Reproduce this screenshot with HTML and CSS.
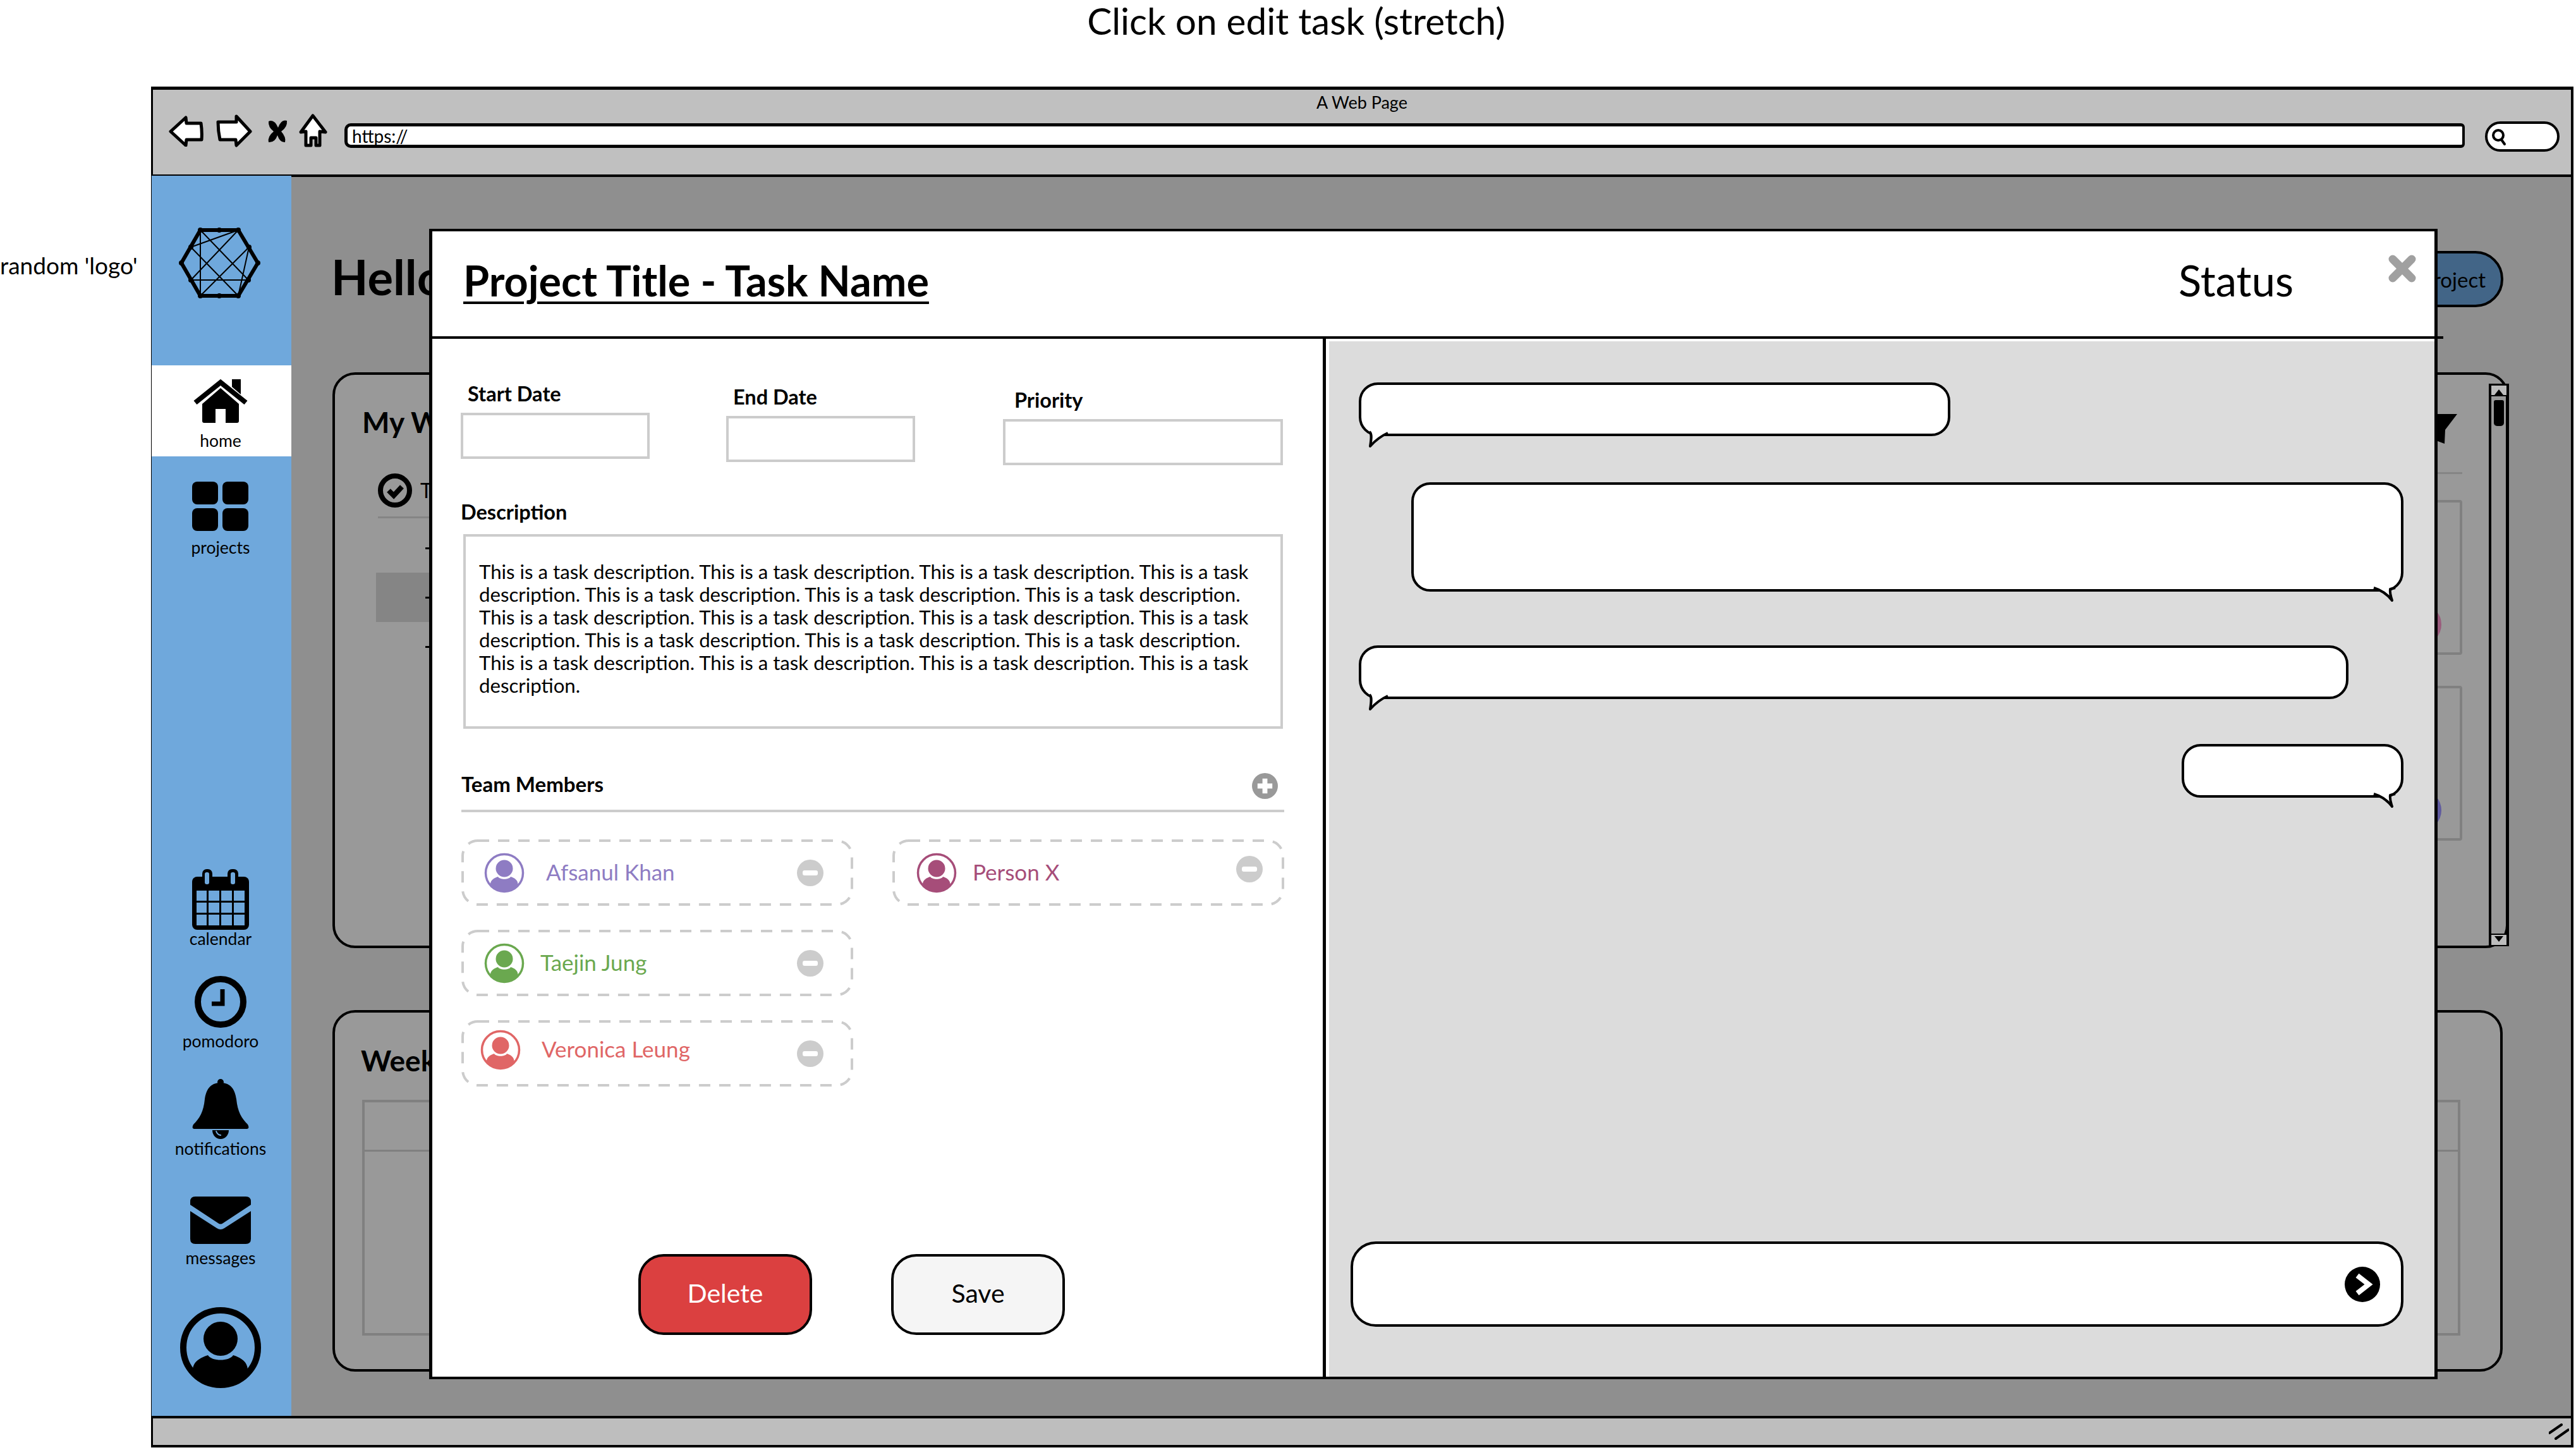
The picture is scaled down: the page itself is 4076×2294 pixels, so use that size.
FILE: index.html
```html
<!DOCTYPE html>
<html>
<head>
    <title>Click on edit task (stretch)</title>
    <link rel="stylesheet" href="styles.css">
</head>
<body>
    <svg class="icon-defs" width="0" height="0">
        <symbol id="user" viewBox="0 0 128 128">
            <circle cx="64" cy="64" r="59" fill="none" stroke="currentColor"/>
            <circle cx="64" cy="50" r="27" fill="currentColor"/>
            <path fill="currentColor" d="M20 108V100C20 86 32 80 44 76C50 86 78 86 84 76C96 80 107 86 107 100V108C96 118 80 123 64 123C48 123 32 118 20 108Z"/>
        </symbol>
        <symbol id="minus" viewBox="0 0 42 42">
            <circle cx="21" cy="21" r="21" fill="#ccc"/>
            <rect x="9" y="17" width="24" height="8" rx="3" fill="#fff"/>
        </symbol>
    </svg>

    <h1 class="page-title">Click on edit task (stretch)</h1>

    <div class="stage">
        <div class="logo-note">random 'logo'</div>

        <div class="window">
            <div class="chrome">
                <div class="window-title">A Web Page</div>
                <div class="toolbar">
                    <svg class="tool tool-back" viewBox="0 0 55 49"><path d="M3 25L27 3L28 12H51Q53 25 52 38H28L27 47Z"/></svg>
                    <svg class="tool tool-forward" viewBox="0 0 57 52"><path d="M3 12H32V3L54 27L32 49L31 40H6Q3 26 3 12Z"/></svg>
                    <svg class="tool tool-stop" viewBox="0 0 31 37"><path d="M1 3Q10 -1 16 13Q21 -1 30 2Q31 12 21 19Q29 28 27 36Q19 37 15 25Q11 37 1 36Q-1 27 9 19Q0 12 1 3Z"/></svg>
                    <svg class="tool tool-home" viewBox="0 0 45 54"><path d="M22 3L42 29L33 28V50H27V38H19V50H11V28L3 29Z"/></svg>
                    <div class="url-bar">https://</div>
                    <div class="search-pill">
                        <svg class="search-icon" viewBox="0 0 24 26"><circle cx="10" cy="10" r="8"/><path d="M15 17L20 24"/></svg>
                    </div>
                </div>
            </div>

            <div class="app">
                <nav class="sidebar">
                    <div class="brand">
                        <svg class="brand-logo" viewBox="0 0 124 108">
                            <path class="hex" d="M30 3H90L121 55L90 107H30L0 55Z"/>
                            <path class="hex-lines" d="M30 3V107M90 3L15 30M90 3L15 82M30 3L106 82M15 30L90 107M107 30L30 107M107 30L90 107M15 82H106"/>
                            <path class="hex-dots" d="M30 3h0M60 3h0M90 3h0M15 30h0M107 30h0M0 55h0M121 55h0M15 82h0M106 82h0M30 107h0M60 107h0M90 107h0"/>
                        </svg>
                    </div>

                    <a class="nav-item nav-home">
                        <svg class="nav-icon" width="86" height="69" viewBox="0 0 86 69">
                            <path d="M14 39L43 14L72 39V66Q72 69 69 69H51V47H35V69H17Q14 69 14 66Z"/>
                            <path class="roof" d="M3 37L43 5L83 37"/>
                            <path d="M61 0H75V24L61 12Z"/>
                        </svg>
                        <span>home</span>
                    </a>
                    <a class="nav-item nav-projects">
                        <svg class="nav-icon" width="90" height="78" viewBox="0 0 90 78">
                            <rect width="41" height="36" rx="8"/>
                            <rect x="48" width="41" height="36" rx="8"/>
                            <rect y="42" width="41" height="36" rx="8"/>
                            <rect x="48" y="42" width="41" height="36" rx="8"/>
                        </svg>
                        <span>projects</span>
                    </a>

                    <div class="nav-bottom">
                        <a class="nav-item nav-calendar">
                            <svg class="nav-icon" width="90" height="96" viewBox="0 0 90 96">
                                <rect y="12" width="90" height="84" rx="8"/>
                                <rect x="16" width="16" height="27" rx="7"/>
                                <rect x="56" width="17" height="27" rx="7"/>
                                <g class="cutout">
                                    <rect x="20" y="5" width="7" height="19" rx="3"/>
                                    <rect x="61" y="5" width="7" height="19" rx="3"/>
                                    <rect x="7" y="34" width="16" height="16"/><rect x="26" y="34" width="17" height="16"/><rect x="46" y="34" width="17" height="16"/><rect x="66" y="34" width="17" height="16"/>
                                    <rect x="7" y="53" width="16" height="16"/><rect x="26" y="53" width="17" height="16"/><rect x="46" y="53" width="17" height="16"/><rect x="66" y="53" width="17" height="16"/>
                                    <rect x="7" y="72" width="16" height="17"/><rect x="26" y="72" width="17" height="17"/><rect x="46" y="72" width="17" height="17"/><rect x="66" y="72" width="17" height="17"/>
                                </g>
                            </svg>
                            <span>calendar</span>
                        </a>
                        <a class="nav-item nav-clock">
                            <svg class="nav-icon" width="83" height="82" viewBox="0 0 83 82">
                                <circle class="clock-ring" cx="41" cy="41" r="36"/>
                                <path class="clock-hands" d="M44 21V44H27"/>
                            </svg>
                            <span>pomodoro</span>
                        </a>
                        <a class="nav-item nav-bell">
                            <svg class="nav-icon" width="90" height="95" viewBox="0 0 90 95">
                                <circle cx="45" cy="5" r="5"/>
                                <path d="M45 6C62 6 68 18 70 32C72 52 78 62 88 72Q92 79 85 79H5Q-2 79 2 72C12 62 18 52 20 32C22 18 28 6 45 6Z"/>
                                <path d="M32 81A13 14 0 0 0 58 81Z"/>
                                <path class="clapper" d="M38 82A8 8 0 0 0 46 89"/>
                            </svg>
                            <span>notifications</span>
                        </a>
                        <a class="nav-item nav-mail">
                            <svg class="nav-icon" width="96" height="75" viewBox="0 0 96 75">
                                <path d="M8 0H88Q96 0 96 8V13L52 42Q48 45 44 42L0 13V8Q0 0 8 0Z"/>
                                <path d="M0 23L42 50Q48 54 54 50L96 23V67Q96 75 88 75H8Q0 75 0 67Z"/>
                            </svg>
                            <span>messages</span>
                        </a>
                        <a class="nav-item nav-user">
                            <svg class="avatar-large" width="128" height="128"><use href="#user"/></svg>
                        </a>
                    </div>
                </nav>

                <main class="content">
                    <header class="content-head">
                        <h2 class="greeting">Hello!</h2>
                        <button class="new-project">New Project</button>
                    </header>

                    <section class="panel panel-work">
                        <div class="work-list">
                            <h3 class="panel-title">My Work</h3>
                            <div class="work-tab">
                                <svg class="check-icon" viewBox="0 0 54 54">
                                    <circle cx="27" cy="27" r="23"/>
                                    <path d="M17 27L25 35L38 21"/>
                                </svg>
                                <span>Tasks</span>
                            </div>
                            <div class="work-row"><i></i></div>
                            <div class="work-row work-row-active"><i></i></div>
                            <div class="work-row"><i></i></div>
                        </div>
                        <div class="work-board">
                            <svg class="filter-icon" viewBox="0 0 64 47"><path d="M0 0H64L45 25L44 47L20 38V25Z"/></svg>
                            <div class="board-card board-card-first"><span class="card-dot dot-pink"></span></div>
                            <div class="board-card"><span class="card-dot dot-blue"></span></div>
                        </div>
                        <div class="scrollbar">
                            <div class="scroll-up"></div>
                            <div class="scroll-thumb"></div>
                            <div class="scroll-down"></div>
                        </div>
                    </section>

                    <section class="panel panel-week">
                        <h3 class="panel-title">Weekly</h3>
                        <div class="week-table"><div class="week-head"></div></div>
                    </section>
                </main>

                <section class="modal">
                    <header class="modal-head">
                        <h2 class="modal-title">Project Title - Task Name</h2>
                        <div class="modal-status">Status</div>
                        <svg class="modal-close" viewBox="0 0 44 44"><path d="M7 7L37 37M37 7L7 37"/></svg>
                    </header>

                    <div class="modal-body">
                        <div class="task-pane">
                            <div class="date-row">
                                <div class="field field-start">
                                    <label class="field-label">Start Date</label>
                                    <div class="field-box"></div>
                                </div>
                                <div class="field field-end">
                                    <label class="field-label">End Date</label>
                                    <div class="field-box"></div>
                                </div>
                                <div class="field field-priority">
                                    <label class="field-label">Priority</label>
                                    <div class="field-box"></div>
                                </div>
                            </div>

                            <label class="field-label desc-label">Description</label>
                            <div class="desc-box">This is a task description. This is a task description. This is a task description. This is a task description. This is a task description. This is a task description. This is a task description. This is a task description. This is a task description. This is a task description. This is a task description. This is a task description. This is a task description. This is a task description. This is a task description. This is a task description. This is a task description. This is a task description.</div>

                            <div class="team-head">
                                <span class="team-label">Team Members</span>
                                <svg class="team-add" viewBox="0 0 42 42">
                                    <circle cx="21" cy="21" r="21"/>
                                    <path d="M21 9V33M9 21H33"/>
                                </svg>
                            </div>

                            <div class="members">
                                <div class="member-col">
                                    <div class="member member-afsanul">
                                        <svg class="member-dash" width="620" height="105"><rect x="2" y="2" width="616" height="101" rx="24"/></svg>
                                        <svg class="avatar-small" width="64" height="64"><use href="#user"/></svg>
                                        <span class="member-name">Afsanul Khan</span>
                                        <svg class="member-remove" width="42" height="42"><use href="#minus"/></svg>
                                    </div>
                                    <div class="member member-taejin">
                                        <svg class="member-dash" width="620" height="105"><rect x="2" y="2" width="616" height="101" rx="24"/></svg>
                                        <svg class="avatar-small" width="64" height="64"><use href="#user"/></svg>
                                        <span class="member-name">Taejin Jung</span>
                                        <svg class="member-remove" width="42" height="42"><use href="#minus"/></svg>
                                    </div>
                                    <div class="member member-veronica">
                                        <svg class="member-dash" width="620" height="105"><rect x="2" y="2" width="616" height="101" rx="24"/></svg>
                                        <svg class="avatar-small" width="64" height="64"><use href="#user"/></svg>
                                        <span class="member-name">Veronica Leung</span>
                                        <svg class="member-remove" width="42" height="42"><use href="#minus"/></svg>
                                    </div>
                                </div>
                                <div class="member-col">
                                    <div class="member member-person">
                                        <svg class="member-dash" width="620" height="105"><rect x="2" y="2" width="616" height="101" rx="24"/></svg>
                                        <svg class="avatar-small" width="64" height="64"><use href="#user"/></svg>
                                        <span class="member-name">Person X</span>
                                        <svg class="member-remove" width="42" height="42"><use href="#minus"/></svg>
                                    </div>
                                </div>
                            </div>

                            <div class="actions">
                                <button class="btn btn-delete">Delete</button>
                                <button class="btn btn-save">Save</button>
                            </div>
                        </div>

                        <div class="chat-pane">
                            <div class="bubble bubble-one">
                                <svg class="tail tail-left" viewBox="0 0 30 33"><path d="M0 9C4 12 3 20 1 32C8 24 18 16 29 11"/></svg>
                            </div>
                            <div class="bubble bubble-two">
                                <svg class="tail tail-right" viewBox="0 0 36 30"><path d="M0 8C10 11 20 16 29 28C27 22 25 16 26 10L34 8"/></svg>
                            </div>
                            <div class="bubble bubble-three">
                                <svg class="tail tail-left" viewBox="0 0 30 33"><path d="M0 9C4 12 3 20 1 32C8 24 18 16 29 11"/></svg>
                            </div>
                            <div class="bubble bubble-four">
                                <svg class="tail tail-right" viewBox="0 0 36 30"><path d="M0 8C10 11 20 16 29 28C27 22 25 16 26 10L34 8"/></svg>
                            </div>
                            <div class="chat-input">
                                <svg class="chat-send" viewBox="0 0 56 56">
                                    <circle cx="28" cy="28" r="28"/>
                                    <path d="M20 14L38 28L20 42"/>
                                </svg>
                            </div>
                        </div>
                    </div>
                </section>
            </div>

            <div class="status-bar">
                <svg class="grip" viewBox="0 0 32 26"><path d="M1 15L20 2M11 24L31 10"/></svg>
            </div>
        </div>
    </div>
</body>
</html>
```

FILE: styles.css
```css
* {
    box-sizing: border-box;
}

body {
    font-family: Lato, "Noto Sans", sans-serif;
    background-color: #fff;
    color: #000;
    margin: 0;
    height: 2294px;
    overflow: hidden;
}

h1, h2, h3 {
    margin: 0;
}

.icon-defs {
    position: absolute;
}

.page-title {
    height: 137px;
    padding: 0 0 0 26px;
    font-size: 58.5px;
    font-weight: 400;
    line-height: 64px;
    text-align: center;
}

.stage {
    display: flex;
}

.logo-note {
    width: 239px;
    padding-top: 261px;
    font-size: 37px;
    line-height: 44px;
    white-space: nowrap;
}

.window {
    width: 3833px;
    height: 2153px;
    border: 4px solid #000;
    border-top-width: 5px;
    border-left-width: 3px;
    display: flex;
    flex-direction: column;
}

/* browser chrome */
.chrome {
    height: 138px;
    background-color: #c0c0c0;
    border-bottom: 4px solid #000;
}

.window-title {
    font-size: 27px;
    line-height: 30px;
    padding-top: 5px;
    height: 38px;
    text-align: center;
}

.toolbar {
    display: flex;
    align-items: center;
    padding-left: 25px;
    height: 54px;
}

.tool {
    flex: none;
}

.tool path {
    fill: #fff;
    stroke: #000;
    stroke-width: 5;
    stroke-linejoin: round;
}

.tool-back {
    width: 55px;
    height: 49px;
}

.tool-forward {
    width: 57px;
    height: 52px;
    margin-left: 20px;
}

.tool-stop {
    width: 31px;
    height: 37px;
    margin-left: 25px;
    overflow: visible;
}

.tool-stop path {
    fill: #000;
    stroke: none;
}

.tool-home {
    width: 45px;
    height: 54px;
    margin-left: 18px;
}

.url-bar {
    width: 3355px;
    height: 39px;
    margin-left: 27px;
    margin-top: 14px;
    background-color: #fff;
    border: 5px solid #000;
    border-right-width: 4px;
    border-radius: 10px 6px 6px 10px;
    font-size: 28px;
    line-height: 30px;
    padding-left: 7px;
}

.search-pill {
    width: 118px;
    height: 48px;
    margin-left: 32px;
    margin-top: 18px;
    background-color: #fff;
    border: 4px solid #000;
    border-radius: 24px;
    padding: 8px 0 0 7px;
}

.search-icon {
    display: block;
    width: 24px;
    height: 26px;
    overflow: visible;
}

.search-icon circle,
.search-icon path {
    fill: none;
    stroke: #000;
    stroke-width: 4;
    stroke-linecap: round;
}

/* app */
.app {
    position: relative;
    height: 1960px;
    display: flex;
}

.sidebar {
    width: 221px;
    flex: none;
    background-color: #6fa8dc;
    display: flex;
    flex-direction: column;
    margin: -2px 0 0 -2px;
}

.brand {
    height: 300px;
    padding-top: 83px;
}

.brand-logo {
    display: block;
    width: 124px;
    height: 108px;
    margin-left: 47px;
    overflow: visible;
}

.hex {
    fill: none;
    stroke: #000;
    stroke-width: 6;
    stroke-linejoin: round;
}

.hex-lines {
    fill: none;
    stroke: #000;
    stroke-width: 2;
}

.hex-dots {
    fill: none;
    stroke: #000;
    stroke-width: 8;
    stroke-linecap: round;
}

.nav-item {
    display: flex;
    flex-direction: column;
    align-items: center;
    padding-right: 3px;
    font-size: 26.5px;
    line-height: 24px;
    white-space: nowrap;
}

.nav-icon {
    display: block;
    flex: none;
}

.cutout {
    fill: #6fa8dc;
}

.roof {
    fill: none;
    stroke: #000;
    stroke-width: 8;
}

.clock-ring {
    fill: none;
    stroke: #000;
    stroke-width: 10;
}

.clock-hands {
    fill: none;
    stroke: #000;
    stroke-width: 7;
}

.clapper {
    fill: none;
    stroke: #6fa8dc;
    stroke-width: 2;
}

.nav-home {
    height: 144px;
    background-color: #fff;
    padding-top: 22px;
}

.nav-home span {
    margin-top: 16px;
}

.nav-projects {
    padding-top: 40px;
}

.nav-projects span {
    margin-top: 14px;
}

.nav-bottom {
    margin-top: auto;
    padding-bottom: 44px;
}

.nav-calendar span {
    margin-top: 2px;
}

.nav-clock {
    padding-top: 47px;
}

.nav-clock span {
    margin-top: 9px;
}

.nav-bell {
    padding-top: 48px;
}

.nav-bell span {
    margin-top: 3px;
}

.nav-mail {
    padding-top: 64px;
}

.nav-mail span {
    margin-top: 10px;
}

.nav-user {
    padding-top: 66px;
}

.avatar-large {
    color: #000;
    stroke-width: 10;
}

.avatar-small {
    flex: none;
    stroke-width: 7;
}

/* page behind the dialog */
.content {
    flex: 1;
    background-color: #8f8f8f;
    padding: 117px 99px 0 65px;
}

.content-head {
    display: flex;
    justify-content: space-between;
    align-items: center;
    height: 89px;
    padding-right: 8px;
}

.greeting {
    font-size: 76px;
    line-height: 81px;
    padding-bottom: 8px;
    margin-left: -2px;
}

.new-project {
    width: 400px;
    height: 89px;
    background-color: #426587;
    border: 4px solid #000;
    border-radius: 44px;
    font-family: Lato, "Noto Sans", sans-serif;
    font-size: 33px;
    text-align: right;
    padding: 0 24px 0 0;
}

.panel {
    position: relative;
    background-color: #999;
    border: 4px solid #000;
    border-radius: 36px;
}

.panel-title {
    font-size: 46px;
    line-height: 46px;
}

.panel-work {
    display: flex;
    justify-content: space-between;
    height: 911px;
    margin-top: 103px;
    padding: 52px 69px 0 43px;
}

.work-list {
    width: 600px;
}

.work-tab {
    display: flex;
    align-items: center;
    gap: 13px;
    margin-top: 56px;
    margin-left: 25px;
    height: 73px;
    padding: 3px 0 16px;
    border-bottom: 3px solid #858585;
    font-size: 32px;
}

.check-icon {
    width: 54px;
    height: 54px;
}

.check-icon circle {
    fill: none;
    stroke: #000;
    stroke-width: 8;
}

.check-icon path {
    fill: none;
    stroke: #000;
    stroke-width: 8;
}

.work-row {
    display: flex;
    align-items: center;
    height: 78px;
    margin-left: 22px;
    padding-left: 78px;
}

.work-tab + .work-row {
    margin-top: 8px;
}

.work-row i {
    width: 300px;
    height: 3px;
    background-color: #000;
}

.work-row-active {
    background-color: #858585;
}

.work-board {
    width: 620px;
    padding-top: 10px;
    display: flex;
    flex-direction: column;
    align-items: flex-end;
}

.filter-icon {
    width: 64px;
    height: 47px;
    margin-right: 8px;
    flex: none;
}

.filter-icon path {
    fill: #000;
}

.board-card {
    width: 100%;
    height: 245px;
    margin-top: 49px;
    border: 4px solid #808080;
    border-radius: 4px;
    padding: 161px 29px 0 0;
    display: flex;
    justify-content: flex-end;
    flex: none;
}

.board-card-first {
    position: relative;
    margin-top: 89px;
}

.board-card-first::before {
    content: "";
    position: absolute;
    top: -48px;
    left: -4px;
    right: -4px;
    border-top: 3px solid #858585;
}

.card-dot {
    width: 64px;
    height: 64px;
    border: 7px solid;
    border-radius: 50%;
}

.dot-pink {
    border-color: #9a5b7c;
}

.dot-blue {
    border-color: #5f5a9f;
}

.scrollbar {
    position: absolute;
    top: 14px;
    bottom: -1px;
    right: -5px;
    width: 32px;
    border: 4px solid #000;
    border-top-width: 3px;
    border-bottom-width: 2px;
    display: flex;
    flex-direction: column;
    align-items: center;
}

.scroll-up {
    width: 100%;
    height: 17px;
    border-bottom: 2px solid #000;
    background-color: #bdbdbd;
    flex: none;
    display: flex;
    justify-content: center;
}

.scroll-up::before {
    content: "";
    margin-top: 2px;
    border: 7px solid transparent;
    border-bottom: 9px solid #000;
    border-top: 0;
}

.scroll-thumb {
    width: 16px;
    height: 41px;
    margin-top: 6px;
    background-color: #000;
    border-radius: 3px 3px 5px 5px;
}

.scroll-down {
    width: 100%;
    height: 18px;
    margin-top: auto;
    border-top: 2px solid #000;
    background-color: #bdbdbd;
    display: flex;
    justify-content: center;
}

.scroll-down::before {
    content: "";
    margin-top: 2px;
    border: 7px solid transparent;
    border-top: 9px solid #000;
    border-bottom: 0;
}

.panel-week {
    height: 572px;
    margin-top: 98px;
    margin-right: 9px;
    padding: 53px 63px 0 41px;
}

.week-table {
    height: 373px;
    margin: 39px 0 0 2px;
    border: 4px solid #808080;
}

.week-head {
    height: 78px;
    border-bottom: 3px solid #808080;
}

/* dialog */
.modal {
    position: absolute;
    left: 437px;
    top: 82px;
    width: 3178px;
    height: 1820px;
    background-color: #fff;
    border: 5px solid #000;
    border-top-width: 4px;
    border-bottom-width: 4px;
    display: flex;
    flex-direction: column;
}

.modal-head {
    display: flex;
    align-items: center;
    height: 170px;
    margin-right: -14px;
    padding: 0 43px 12px 49px;
    border-bottom: 4px solid #000;
    flex: none;
}

.modal-title {
    flex: 1;
    font-size: 66.5px;
    font-weight: 700;
    line-height: 80px;
    text-decoration: underline;
    text-decoration-thickness: 4px;
    text-underline-offset: 8px;
}

.modal-status {
    font-size: 67px;
    line-height: 80px;
    margin-right: 150px;
}

.modal-close {
    width: 44px;
    height: 44px;
    align-self: flex-start;
    margin-top: 37px;
    flex: none;
}

.modal-close path {
    fill: none;
    stroke: #a0a0a0;
    stroke-width: 13;
    stroke-linecap: round;
}

.modal-body {
    flex: 1;
    display: flex;
    min-height: 0;
}

.task-pane {
    width: 1414px;
    flex: none;
    border-right: 5px solid #000;
    padding: 71px 0 66px 45px;
    display: flex;
    flex-direction: column;
}

.date-row {
    display: flex;
    align-items: flex-start;
    height: 129px;
}

.field-label {
    display: block;
    height: 34px;
    font-size: 32.5px;
    font-weight: 700;
    line-height: 32px;
}

.field-box {
    height: 73px;
    margin-top: 12px;
    border: 4px solid #ccc;
    background-color: #fff;
}

.field-start {
    width: 299px;
}

.field-start .field-label {
    padding-left: 11px;
}

.field-end {
    width: 299px;
    margin-left: 121px;
    margin-top: 5px;
}

.field-end .field-label {
    padding-left: 11px;
}

.field-priority {
    width: 443px;
    margin-left: 139px;
    margin-top: 10px;
}

.field-priority .field-label {
    padding-left: 18px;
}

.desc-label {
    margin-top: 58px;
}

.desc-box {
    width: 1297px;
    height: 308px;
    margin-top: 17px;
    margin-left: 4px;
    border: 4px solid #ccc;
    padding: 37px 40px 0 21px;
    font-size: 31.2px;
    line-height: 36px;
}

.team-head {
    width: 1302px;
    margin: 69px 0 0 1px;
    padding: 0 10px 16px 0;
    border-bottom: 4px solid #ccc;
    display: flex;
    justify-content: space-between;
    align-items: center;
}

.team-label {
    font-size: 33px;
    font-weight: 700;
    line-height: 36px;
    margin-bottom: 7px;
}

.team-add {
    width: 41px;
    height: 41px;
}

.team-add circle {
    fill: #999;
}

.team-add path {
    fill: none;
    stroke: #fff;
    stroke-width: 8;
}

.members {
    display: flex;
    gap: 62px;
    margin: 43px 0 0 1px;
}

.member-col {
    width: 620px;
    display: flex;
    flex-direction: column;
    gap: 38px;
}

.member {
    position: relative;
    height: 105px;
    display: flex;
    align-items: center;
    padding: 0 47px 0 36px;
    font-size: 35px;
}

.member-name {
    margin-bottom: 4px;
}

.member-dash {
    position: absolute;
    left: 0;
    top: 0;
}

.member-dash rect {
    fill: none;
    stroke: #ccc;
    stroke-width: 4;
    stroke-dasharray: 18 14;
}

.member-remove {
    margin-left: auto;
    flex: none;
}

.member-afsanul {
    color: #8e7cc3;
}

.member-afsanul .member-name {
    margin-left: 34px;
}

.member-taejin {
    color: #6aa84f;
}

.member-taejin .member-name {
    margin-left: 25px;
}

.member-veronica {
    color: #e06666;
    padding-left: 30px;
    padding-bottom: 12px;
}

.member-veronica .member-name {
    margin-left: 33px;
}

.member-veronica .member-remove {
    margin-top: 12px;
}

.member-person {
    color: #a64d79;
    padding-left: 38px;
    padding-right: 34px;
}

.member-person .member-name {
    margin-left: 25px;
}

.member-person .member-remove {
    margin-bottom: 12px;
}

.actions {
    display: flex;
    gap: 125px;
    margin: auto 0 0 281px;
}

.btn {
    width: 275px;
    height: 128px;
    border: 4px solid #000;
    border-radius: 40px;
    font-family: Lato, "Noto Sans", sans-serif;
    font-size: 41px;
    padding: 0 0 6px;
}

.btn-delete {
    background-color: #db4040;
    color: #fff;
}

.btn-save {
    background-color: #f5f5f5;
    color: #000;
}

.chat-pane {
    flex: 1;
    margin: 4px 0 0 5px;
    background-color: #dcdcdc;
    padding: 65px 49px 79px 47px;
    display: flex;
    flex-direction: column;
    align-items: flex-start;
}

.bubble {
    position: relative;
    height: 85px;
    flex: none;
    background-color: #fff;
    border: 4px solid #000;
    border-radius: 30px;
}

.bubble-one {
    width: 936px;
}

.bubble-two {
    width: 1570px;
    height: 173px;
    margin: 73px 0 0 83px;
}

.bubble-three {
    width: 1566px;
    margin-top: 85px;
}

.bubble-four {
    width: 351px;
    margin: 71px 0 0 1302px;
}

.tail {
    position: absolute;
    overflow: visible;
}

.tail path {
    fill: #fff;
    stroke: #000;
    stroke-width: 4;
    stroke-linejoin: round;
}

.tail-left {
    left: 13px;
    bottom: -21px;
    width: 30px;
    height: 33px;
}

.tail-right {
    right: 7px;
    bottom: -20px;
    width: 36px;
    height: 30px;
}

.chat-input {
    width: 1666px;
    height: 135px;
    margin: auto 0 0 -13px;
    background-color: #fff;
    border: 4px solid #000;
    border-radius: 40px;
    display: flex;
    align-items: center;
    justify-content: flex-end;
    padding-right: 33px;
}

.chat-send {
    width: 56px;
    height: 56px;
}

.chat-send path {
    fill: none;
    stroke: #fff;
    stroke-width: 8;
}

.status-bar {
    flex: 1;
    background-color: #bebebe;
    border-top: 4px solid #000;
    display: flex;
    justify-content: flex-end;
    align-items: center;
    padding-right: 3px;
}

.grip {
    width: 32px;
    height: 26px;
}

.grip path {
    fill: none;
    stroke: #000;
    stroke-width: 4;
    stroke-linecap: round;
}
```
